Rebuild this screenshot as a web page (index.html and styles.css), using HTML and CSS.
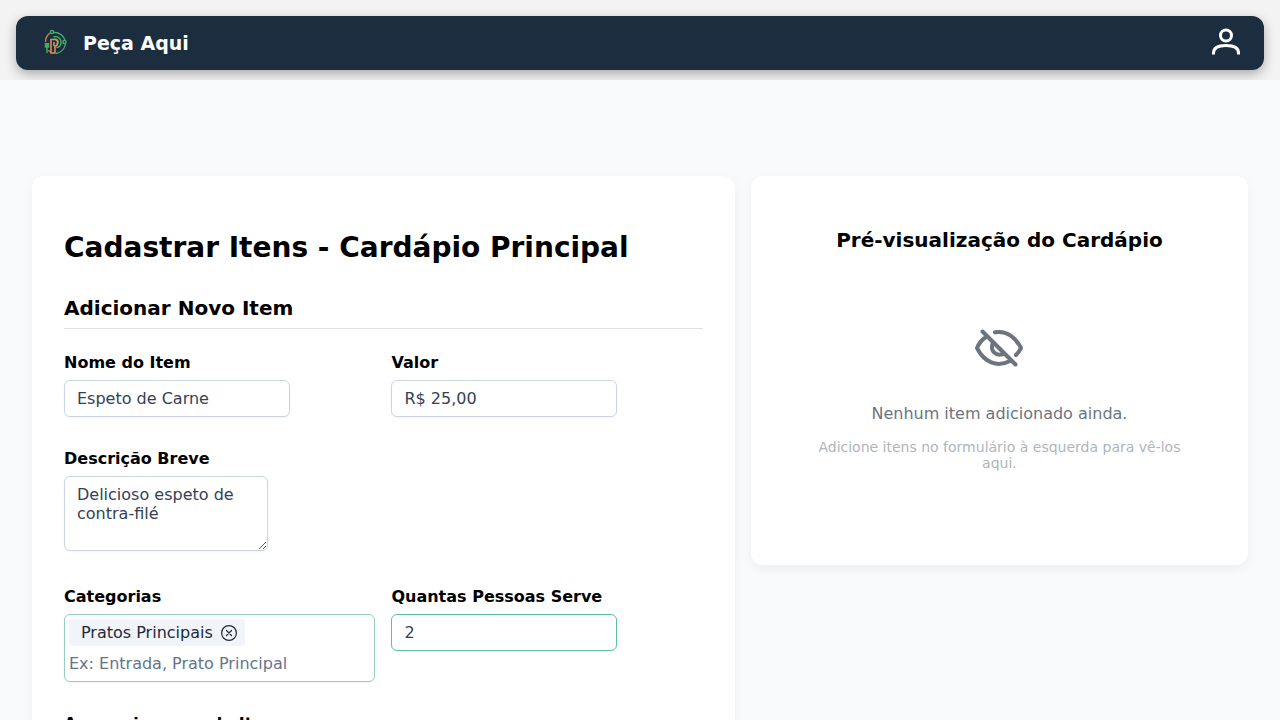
FILE: index.html
```html
<!DOCTYPE html>
<html lang="pt-BR">
<head>
<meta charset="utf-8">
<meta name="viewport" content="width=device-width, initial-scale=1">
<title>Peça Aqui</title>
<link rel="stylesheet" href="styles.css">
</head>
<body>
<header class="header">
  <nav class="navbar">
    <a class="brand" href="#">
      <svg class="brand-logo" viewBox="0 0 40 40" fill="none" aria-hidden="true">
        <path d="M18 10.500A11 11 0 0 1 29 18M29.500 21.500A11 11 0 0 1 20 31.500" stroke="#45a868" stroke-width="1.300"/>
        <path d="M14 11A11 11 0 0 0 9.500 20M12 28.500L15 30" stroke="#d08550" stroke-width="1.300"/>
        <circle cx="16" cy="10" r="1.600" stroke="#45b868" stroke-width="1.300"/>
        <circle cx="28.500" cy="20" r="1.600" stroke="#45b868" stroke-width="1.300"/>
        <path d="M17.500 14.800C27 13 27 25.500 20.500 25.500M18 17.300C23 16.500 23 22 20.500 22" stroke="#45b868" stroke-width="1.400"/>
        <path d="M9.500 21v4h3v-4M11 21v10" stroke="#45a868" stroke-width="1.500"/>
        <path d="M15 31V17.500h4a2.500 2.500 0 0 1 2.500 2.500v1.500a2.500 2.500 0 0 1-2.500 2.500v7zM18 20v4" stroke="#e5905a" stroke-width="1.500"/>
      </svg>
      <span class="brand-name">Peça Aqui</span>
    </a>
    <button class="user-button" type="button" aria-label="Conta do usuário">
      <svg viewBox="0 0 28 28" fill="none" stroke="currentColor" stroke-width="3" aria-hidden="true">
        <circle cx="14" cy="7.500" r="5.500"/>
        <path d="M1.500 26.500v-1.500c0-5 4-7.500 12.500-7.500s12.500 2.500 12.500 7.500v1.500"/>
      </svg>
    </button>
  </nav>
</header>
<main class="page">
  <section class="card form-card">
    <h1 class="title">Cadastrar Itens - Cardápio Principal</h1>
    <h2 class="subtitle">Adicionar Novo Item</h2>
    <form class="item-form">
      <div class="field">
        <label for="nome">Nome do Item</label>
        <input class="input" id="nome" type="text" value="Espeto de Carne">
      </div>
      <div class="field">
        <label for="valor">Valor</label>
        <input class="input" id="valor" type="text" value="R$ 25,00">
      </div>
      <div class="field field-wide">
        <label for="descricao">Descrição Breve</label>
        <textarea class="input textarea" id="descricao">Delicioso espeto de contra-filé</textarea>
      </div>
      <div class="field">
        <label for="categorias">Categorias</label>
        <div class="chips">
          <span class="chip">Pratos Principais
            <button class="chip-remove" type="button" aria-label="Remover Pratos Principais">
              <svg viewBox="0 0 16 16" fill="none" stroke="currentColor" stroke-width="1.200" stroke-linecap="round" aria-hidden="true">
                <circle cx="8" cy="8" r="7.400"/>
                <path d="M5.500 5.500l5 5M10.500 5.500l-5 5"/>
              </svg>
            </button>
          </span>
          <input class="chip-input" id="categorias" type="text" placeholder="Ex: Entrada, Prato Principal">
        </div>
      </div>
      <div class="field">
        <label for="pessoas">Quantas Pessoas Serve</label>
        <input class="input input-active" id="pessoas" type="text" value="2">
      </div>
      <div class="field field-wide">
        <label for="imagem">Anexar imagem do Item</label>
        <input class="input" id="imagem" type="file">
      </div>
    </form>
  </section>
  <aside class="card preview-card">
    <h2 class="preview-title">Pré-visualização do Cardápio</h2>
    <div class="empty">
      <svg class="empty-icon" viewBox="0 0 48 48" fill="none" stroke="currentColor" stroke-width="4" stroke-linecap="round" stroke-linejoin="round" aria-hidden="true">
        <path d="M7.500 7.500l33 33"/>
        <path d="M20 8.300C32 6 41 14 46 24q-2 4-5 7"/>
        <path d="M11 13Q5 17 2 24C9 38 22 44 35 37"/>
        <path d="M17.500 20C15 27 21 32.500 28 30"/>
      </svg>
      <p class="empty-text">Nenhum item adicionado ainda.</p>
      <p class="empty-hint">Adicione itens no formulário à esquerda para vê-los aqui.</p>
    </div>
  </aside>
</main>
</body>
</html>
```
FILE: styles.css
```css
* { box-sizing: border-box; }
body {
  margin: 0;
  background: #f8fafc;
  color: #000;
  font: 16px/19px "DejaVu Sans", sans-serif;
}
h1, h2, p { margin: 0; }
button { padding: 0; border: 0; background: none; color: inherit; cursor: pointer; }
svg { display: block; }
.header {
  padding: 16px 16px 10px;
  background: #f3f3f3;
  overflow: hidden;
}
.navbar {
  display: flex;
  align-items: center;
  justify-content: space-between;
  padding: 6px 24px 8px 20px;
  border-radius: 12px;
  background: #1c2d3f;
  box-shadow: 0 4px 12px rgba(0, 0, 0, 0.3);
  color: #fff;
}
.brand {
  display: flex;
  align-items: center;
  gap: 7px;
  color: inherit;
  font-size: 19px;
  font-weight: 700;
  text-decoration: none;
}
.brand-logo { width: 40px; height: 40px; }
.brand-name { padding-top: 2px; }
.user-button svg { width: 28px; height: 28px; }
.page {
  display: grid;
  grid-template-columns: 1.414fr 1fr;
  gap: 16px;
  align-items: start;
  padding: 96px 32px 32px;
}
.card {
  border-radius: 12px;
  background: #fff;
  box-shadow: 0 4px 12px rgba(0, 0, 0, 0.05);
}
.form-card { padding: 55px 32px 32px; }
.title { font-size: 28px; line-height: 33px; }
.subtitle {
  margin: 32px 0 24px;
  padding-bottom: 8px;
  border-bottom: 1px solid #dee2e6;
  font-size: 20px;
  line-height: 24px;
}
.item-form {
  display: grid;
  grid-template-columns: 1fr 1fr;
  gap: 32px 16px;
}
.field {
  display: flex;
  flex-direction: column;
  align-items: flex-start;
  gap: 8px;
}
.field-wide { grid-column: 1 / -1; }
.field label { font-weight: 700; }
.input {
  width: 226px;
  max-width: 100%;
  padding: 8px 12px;
  border: 1px solid #cbd5e1;
  border-radius: 6px;
  outline: 0;
  background: #fff;
  box-shadow: 0 1px 2px rgba(18, 18, 23, 0.05);
  color: #334155;
  font: inherit;
}
.textarea { width: 204px; height: 75px; margin-bottom: 4px; }
.input-active { border-color: #5bc0a4; }
.chips {
  display: flex;
  flex-direction: column;
  align-items: flex-start;
  gap: 4px;
  width: 100%;
  padding: 4px;
  border: 1px solid #94cfc2;
  border-radius: 6px;
  box-shadow: 0 1px 2px rgba(18, 18, 23, 0.05);
}
.chip {
  display: flex;
  align-items: center;
  gap: 8px;
  padding: 4px 8px 4px 12px;
  border-radius: 4px;
  background: #f1f5f9;
  color: #1e293b;
}
.chip-remove svg { width: 16px; height: 16px; }
.chip-input {
  width: 100%;
  padding: 4px 0;
  border: 0;
  outline: 0;
  background: none;
  color: #334155;
  font: inherit;
}
.chip-input::placeholder { color: #64748b; opacity: 1; }
.preview-card { padding: 52px 32px 32px; text-align: center; }
.preview-title { font-size: 20px; line-height: 24px; }
.empty { padding: 72px 28px 62px; color: #6c757d; }
.empty-icon { width: 48px; height: 48px; margin: 0 auto 32px; }
.empty-text { margin-bottom: 16px; }
.empty-hint { color: #adb5bd; font-size: 14px; line-height: 16px; }
```
